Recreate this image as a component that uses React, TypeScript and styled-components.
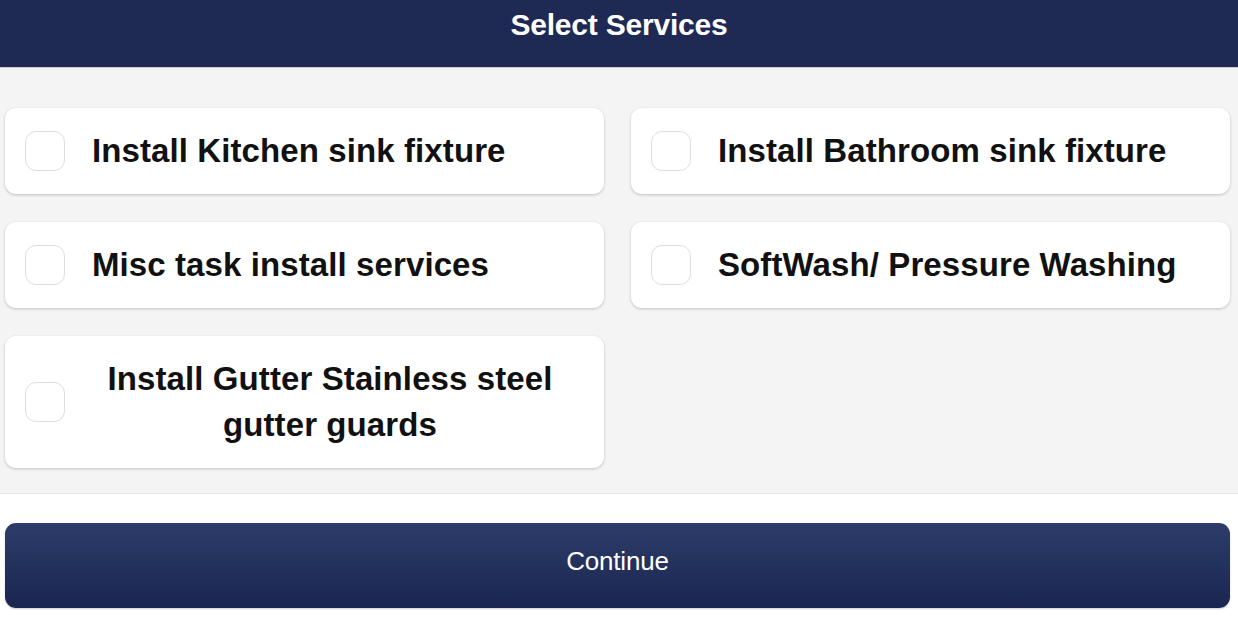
import * as React from "react";
import styled, { createGlobalStyle } from "styled-components";

const GlobalStyle = createGlobalStyle`
  html, body {
    margin: 0;
    padding: 0;
    background: #ffffff;
    font-family: "Liberation Sans", Arial, Helvetica, sans-serif;
  }
`;

const Page = styled.div`
  width: 1238px;
  height: 620px;
  display: flex;
  flex-direction: column;
  overflow: hidden;
  background: #ffffff;
`;

const Header = styled.header`
  height: 68px;
  box-sizing: border-box;
  background: #1e2a54;
  border-bottom: 1px solid #c9ccd4;
  color: #ffffff;
  display: flex;
  justify-content: center;
  align-items: flex-start;
  padding-top: 8px;
`;

const Title = styled.h1`
  margin: 0;
  font-size: 30px;
  line-height: 34px;
  font-weight: 700;
  letter-spacing: -0.2px;
`;

const Body = styled.main`
  flex: 0 0 auto;
  height: 426px;
  box-sizing: border-box;
  background: #f4f4f4;
  border-bottom: 1px solid #e6e6e6;
  padding: 40px 8px 0 5px;
`;

const Grid = styled.div`
  display: grid;
  grid-template-columns: 599px 599px;
  column-gap: 27px;
  row-gap: 28px;
  align-items: start;
`;

const Card = styled.label`
  display: flex;
  align-items: center;
  gap: 27px;
  box-sizing: border-box;
  padding: 20px 36px 20px 20px;
  background: #ffffff;
  border-radius: 11px;
  box-shadow: 0 1px 3px rgba(0, 0, 0, 0.22);
  cursor: pointer;
`;

const Box = styled.span<{ $checked: boolean }>`
  flex: 0 0 auto;
  width: 38px;
  height: 38px;
  border: 1.5px solid #dedede;
  border-radius: 11px;
  background: ${(p) => (p.$checked ? "#1e2a54" : "#ffffff")};
  display: flex;
  align-items: center;
  justify-content: center;
`;

const Label = styled.span`
  font-size: 33px;
  line-height: 46px;
  font-weight: 700;
  color: #111111;
  text-align: center;
  letter-spacing: 0.1px;
`;

const Footer = styled.footer`
  flex: 1;
  padding: 29px 8px 0 5px;
`;

const ContinueButton = styled.button`
  width: 100%;
  height: 85px;
  border: none;
  border-radius: 11px;
  padding: 0 0 8px;
  background: linear-gradient(180deg, #2d3c68 0%, #23315d 50%, #1a2650 100%);
  color: #ffffff;
  font-family: "Liberation Sans", Arial, Helvetica, sans-serif;
  font-size: 26px;
  letter-spacing: -0.2px;
  box-shadow: 0 1px 2px rgba(0, 0, 0, 0.2);
  cursor: pointer;
`;

const services = [
  "Install Kitchen sink fixture",
  "Install Bathroom sink fixture",
  "Misc task install services",
  "SoftWash/ Pressure Washing",
  "Install Gutter Stainless steel gutter guards",
];

export default function App() {
  const [selected, setSelected] = React.useState<string[]>([]);

  const toggle = (name: string) =>
    setSelected((s) => (s.includes(name) ? s.filter((x) => x !== name) : [...s, name]));

  return (
    <Page>
      <GlobalStyle />
      <Header>
        <Title>Select Services</Title>
      </Header>
      <Body>
        <Grid>
          {services.map((name) => {
            const checked = selected.includes(name);
            return (
              <Card key={name} onClick={() => toggle(name)}>
                <Box $checked={checked}>
                  {checked && (
                    <svg width="22" height="22" viewBox="0 0 24 24" fill="none" stroke="#fff" strokeWidth="3">
                      <path d="M5 12l5 5 9-10" />
                    </svg>
                  )}
                </Box>
                <Label>{name}</Label>
              </Card>
            );
          })}
        </Grid>
      </Body>
      <Footer>
        <ContinueButton>Continue</ContinueButton>
      </Footer>
    </Page>
  );
}
